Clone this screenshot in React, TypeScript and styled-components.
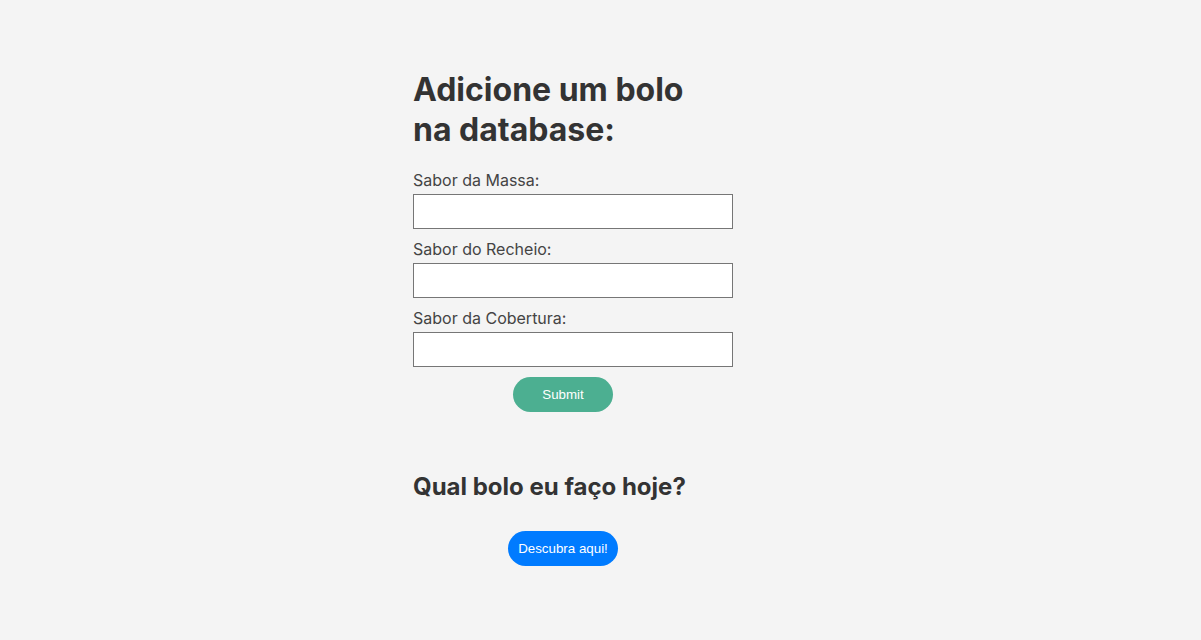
import React, { useState } from "react";
import styled, { createGlobalStyle } from "styled-components";

const GlobalStyle = createGlobalStyle`
  body {
    margin: 0;
    background: #f4f4f4;
    font-family: Inter, "Noto Sans", sans-serif;
    color: #333333;
  }
`;

const App = () => {
  const [massa, setMassa] = useState("");
  const [recheio, setRecheio] = useState("");
  const [cobertura, setCobertura] = useState("");

  return (
    <>
      <GlobalStyle />
      <Page>
        <Column>
          <Title>Adicione um bolo na database:</Title>
          <CakeForm onSubmit={(e) => e.preventDefault()}>
            <Field>
              <label htmlFor="massa">Sabor da Massa:</label>
              <input
                id="massa"
                value={massa}
                onChange={(e) => setMassa(e.target.value)}
              />
            </Field>
            <Field>
              <label htmlFor="recheio">Sabor do Recheio:</label>
              <input
                id="recheio"
                value={recheio}
                onChange={(e) => setRecheio(e.target.value)}
              />
            </Field>
            <Field>
              <label htmlFor="cobertura">Sabor da Cobertura:</label>
              <input
                id="cobertura"
                value={cobertura}
                onChange={(e) => setCobertura(e.target.value)}
              />
            </Field>
            <ButtonRow>
              <PillButton type="submit" color="#4caf91" width={100}>
                Submit
              </PillButton>
            </ButtonRow>
          </CakeForm>

          <Subtitle>Qual bolo eu faço hoje?</Subtitle>
          <ButtonRow>
            <PillButton type="button" color="#007bff">
              Descubra aqui!
            </PillButton>
          </ButtonRow>
        </Column>
      </Page>
    </>
  );
};

export default App;

const Page = styled.main`
  display: flex;
  justify-content: center;
  padding-top: 70px;
  min-height: 640px;
  box-sizing: border-box;
`;

const Column = styled.div`
  width: 375px;
  display: flex;
  flex-direction: column;
`;

const Title = styled.h1`
  margin: 0;
  width: 300px;
  font-size: 32px;
  line-height: 40px;
  font-weight: 700;
  color: #333333;
`;

const CakeForm = styled.form`
  width: 300px;
  margin-top: 20px;
  display: flex;
  flex-direction: column;
  gap: 10px;
`;

const Field = styled.div`
  display: flex;
  flex-direction: column;
  gap: 4px;

  label {
    font-size: 16px;
    color: #444444;
  }

  input {
    width: 320px;
    height: 35px;
    box-sizing: border-box;
    border: 1px solid #767676;
    background: #ffffff;
    padding: 0 10px;
    font-family: inherit;
    font-size: 16px;
    outline: none;
  }
`;

const ButtonRow = styled.div`
  width: 300px;
  display: flex;
  justify-content: center;
`;

const PillButton = styled.button<{ color: string; width?: number }>`
  height: 35px;
  min-width: ${(p) => (p.width ? `${p.width}px` : "auto")};
  padding: 0 10px;
  border: none;
  border-radius: 18px;
  background: ${(p) => p.color};
  color: #ffffff;
  font-family: "Liberation Sans", Arial, sans-serif;
  font-size: 13.333px;
  cursor: pointer;
`;

const Subtitle = styled.h2`
  margin: 60px 0 30px;
  font-size: 24px;
  font-weight: 700;
  color: #333333;
`;
